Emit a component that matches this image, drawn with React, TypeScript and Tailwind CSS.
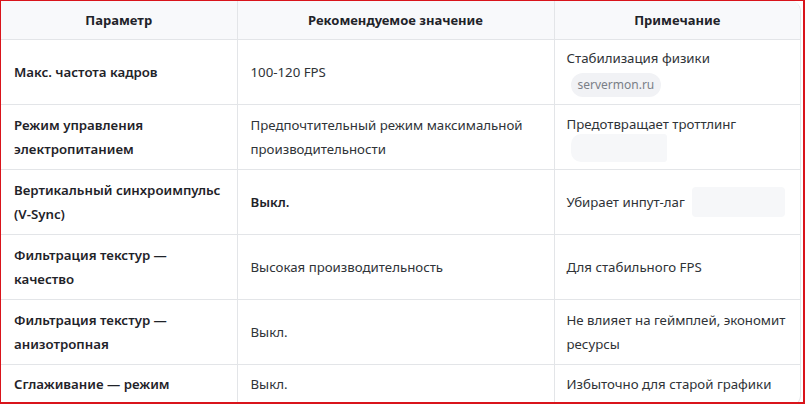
import React from 'react'

type Row = {
  param: string
  value: React.ReactNode
  note: React.ReactNode
  h: string
}

const Chip = ({ children }: { children?: React.ReactNode }) => (
  <span className="inline-block rounded-full bg-[#f1f2f5] px-[7px] text-[12px] leading-[24px] text-[#7a7f87]">
    {children}
  </span>
)

const rows: Row[] = [
  {
    param: 'Макс. частота кадров',
    value: '100-120 FPS',
    h: 'h-[65px]',
    note: (
      <>
        <div>Стабилизация физики</div>
        <div className="mt-[2px] pl-[4px]">
          <Chip>servermon.ru</Chip>
        </div>
      </>
    ),
  },
  {
    param: 'Режим управления электропитанием',
    value: 'Предпочтительный режим максимальной производительности',
    h: 'h-[65px]',
    note: (
      <>
        <div>Предотвращает троттлинг</div>
        <div className="-mt-[2px] pl-[4px]">
          <span className="block h-[28px] w-[96px] rounded-l-[10px] rounded-r-[3px] bg-[#f6f7f9]" />
        </div>
      </>
    ),
  },
  {
    param: 'Вертикальный синхроимпульс (V-Sync)',
    value: <span className="font-semibold text-[#1f2329]">Выкл.</span>,
    h: 'h-[65px]',
    note: (
      <div className="flex items-center whitespace-nowrap">
        <span>Убирает инпут-лаг</span>
        <span className="ml-[7px] inline-block h-[30px] w-[93px] shrink-0 rounded-[4px] bg-[#f6f7f9]" />
      </div>
    ),
  },
  {
    param: 'Фильтрация текстур — качество',
    value: 'Высокая производительность',
    h: 'h-[65px]',
    note: 'Для стабильного FPS',
  },
  {
    param: 'Фильтрация текстур — анизотропная',
    value: 'Выкл.',
    h: 'h-[65px]',
    note: 'Не влияет на геймплей, экономит ресурсы',
  },
  {
    param: 'Сглаживание — режим',
    value: 'Выкл.',
    h: 'h-[40px]',
    note: 'Избыточно для старой графики',
  },
]

export default function App() {
  return (
    <div
      className="h-[404px] w-[805px] overflow-hidden border-t border-l border-r-2 border-b-2 border-[#d9141b] bg-white"
      style={{ fontFamily: '"Noto Sans", "Open Sans", Arial, sans-serif' }}
    >
      <div className="w-[800px] overflow-hidden rounded-r-[10px] border-r border-b border-[#e3e5e8]">
        <table className="w-full table-fixed border-collapse text-[13.25px] leading-[24px] text-[#2f3337]">
          <colgroup>
            <col className="w-[236px]" />
            <col className="w-[317px]" />
            <col />
          </colgroup>
          <thead>
            <tr className="h-[38px] bg-[#f8f9fb]">
              <th className="border-b border-[#e3e5e8] text-center text-[13px] font-bold text-[#1f2329]">Параметр</th>
              <th className="border-b border-l border-[#e3e5e8] text-center text-[13px] font-bold text-[#1f2329]">
                Рекомендуемое значение
              </th>
              <th className="border-b border-l border-[#e3e5e8] text-center text-[13px] font-bold text-[#1f2329]">
                Примечание
              </th>
            </tr>
          </thead>
          <tbody>
            {rows.map((r) => (
              <tr key={r.param} className={r.h}>
                <td className="border-b border-[#e3e5e8] pl-[13px] pr-[8px] align-middle font-semibold text-[#1f2329]">
                  {r.param}
                </td>
                <td className="border-b border-l border-[#e3e5e8] pl-[13px] pr-[8px] align-middle">{r.value}</td>
                <td className="border-b border-l border-[#e3e5e8] pl-[12px] pr-[6px] align-middle">{r.note}</td>
              </tr>
            ))}
          </tbody>
        </table>
      </div>
    </div>
  )
}
